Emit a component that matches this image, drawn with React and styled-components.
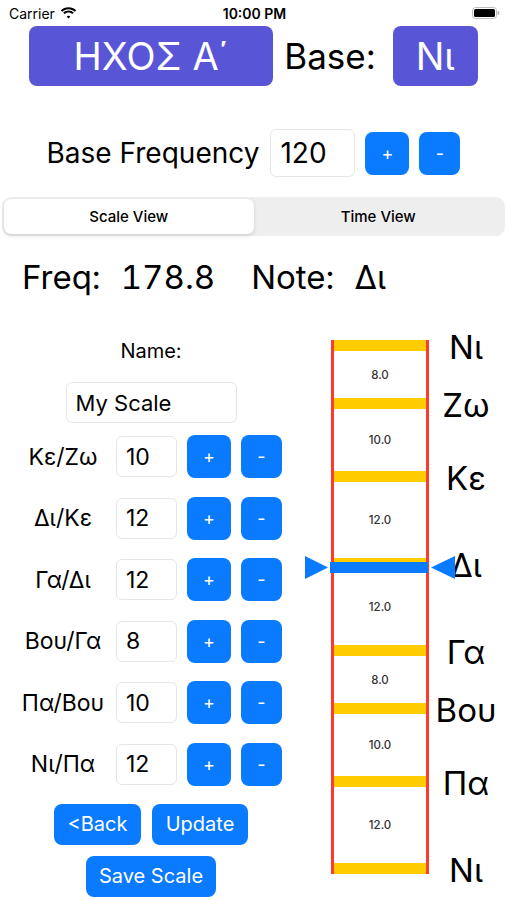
import styled, { createGlobalStyle } from 'styled-components';

const GlobalStyle = createGlobalStyle`
  * {
    margin: 0;
    padding: 0;
    box-sizing: border-box;
  }
  html, body, #root {
    width: 100%;
    background-color: #ffffff;
    font-family: "Inter", "Noto Sans", "Liberation Sans", sans-serif;
    color: #000;
  }
`;

const BLUE = '#0A7AFF';
const PURPLE = '#5856D6';
const UNIT = 7.27;
const BAR = 11;

const Page = styled.div`
  width: 507px;
  height: 900px;
  overflow: hidden;
  display: flex;
  flex-direction: column;
`;

const StatusBar = styled.div`
  height: 26px;
  display: flex;
  align-items: center;
  justify-content: space-between;
  padding: 0 7px 0 9px;
  font-size: 14px;
`;

const Carrier = styled.div`
  display: flex;
  align-items: center;
  gap: 5px;
  width: 100px;
`;

const Clock = styled.div`
  font-weight: 600;
  font-size: 14px;
`;

const BatteryBox = styled.div`
  width: 100px;
  display: flex;
  justify-content: flex-end;
`;

const TopRow = styled.div`
  display: flex;
  align-items: center;
  justify-content: center;
  height: 60px;
  gap: 11px;
`;

const PurpleButton = styled.button`
  width: ${p => p.$w}px;
  height: 60px;
  border: none;
  border-radius: 8px;
  background: ${PURPLE};
  color: #fff;
  font-family: inherit;
  font-size: 38px;
  font-weight: 400;
`;

const BaseLabel = styled.span`
  font-size: 35px;
  margin-right: 6px;
`;

const FreqRow = styled.div`
  display: flex;
  align-items: center;
  justify-content: center;
  margin-top: 43px;
  height: 48px;
  gap: 10px;
`;

const FreqLabel = styled.span`
  font-size: 28px;
  margin-right: 1px;
`;

const Field = styled.div`
  width: ${p => p.$w}px;
  height: ${p => p.$h}px;
  border: 1px solid #E6E6E6;
  border-radius: 6px;
  display: flex;
  align-items: center;
  padding-left: ${p => p.$pad || 9}px;
  font-size: ${p => p.$size}px;
`;

const StepButton = styled.button`
  width: ${p => p.$w}px;
  height: 43px;
  border: none;
  border-radius: 8px;
  background: ${BLUE};
  color: #fff;
  font-family: inherit;
  font-size: 18px;
  display: flex;
  align-items: center;
  justify-content: center;
`;

const Segmented = styled.div`
  margin: 20px 2px 0;
  height: 39px;
  background: #EEEEEF;
  border-radius: 9px;
  padding: 2px;
  display: flex;
`;

const Segment = styled.div`
  flex: 1;
  display: flex;
  align-items: center;
  justify-content: center;
  font-size: 15px;
  font-weight: 500;
  border-radius: 7px;
  background: ${p => (p.$active ? '#fff' : 'transparent')};
  box-shadow: ${p => (p.$active ? '0 2px 4px rgba(0,0,0,0.12)' : 'none')};
`;

const Reading = styled.div`
  display: flex;
  align-items: center;
  height: 38px;
  margin-top: 22px;
  padding-left: 22px;
  font-size: 33px;
  font-variant-numeric: tabular-nums;
`;

const ReadingPart = styled.span`
  margin-left: ${p => p.$ml || 0}px;
`;

const Body = styled.div`
  display: flex;
  margin-top: 43px;
  padding-left: 20px;
`;

const LeftCol = styled.div`
  width: 262px;
  display: flex;
  flex-direction: column;
  align-items: center;
`;

const NameLabel = styled.div`
  font-size: 20px;
  height: 24px;
  line-height: 24px;
`;

const NameField = styled(Field)`
  margin-top: 19px;
`;

const Rows = styled.div`
  width: 100%;
  margin-top: 12px;
  display: flex;
  flex-direction: column;
  gap: 18.5px;
`;

const Row = styled.div`
  display: flex;
  align-items: center;
  height: 43px;
  gap: 10px;
`;

const RowLabel = styled.div`
  width: 86px;
  text-align: center;
  font-size: 23px;
  white-space: nowrap;
`;

const ActionRow = styled.div`
  display: flex;
  gap: 11px;
  margin-top: ${p => p.$mt}px;
`;

const ActionButton = styled.button`
  width: ${p => p.$w}px;
  height: 41px;
  border: none;
  border-radius: 8px;
  background: ${BLUE};
  color: #fff;
  font-family: inherit;
  font-size: 20px;
`;

const RightCol = styled.div`
  margin-left: 49px;
  margin-top: 1px;
  position: relative;
  display: flex;
  flex-direction: column;
`;

const Rung = styled.div`
  display: flex;
  align-items: center;
  height: ${BAR}px;
`;

const Span = styled.div`
  display: flex;
  height: ${p => p.$h}px;
`;

const Rail = styled.div`
  width: 98px;
  height: 100%;
  border-left: 3px solid #FF3B30;
  border-right: 3px solid #FF3B30;
  display: flex;
  align-items: center;
  justify-content: center;
  font-size: 11.5px;
  font-weight: 500;
  color: #333;
`;

const RungBar = styled.div`
  width: 100%;
  height: 100%;
  background: #FFCC00;
`;

const NoteName = styled.div`
  width: 74px;
  text-align: center;
  font-size: 33px;
  line-height: ${BAR}px;
  padding-top: 4px;
  white-space: nowrap;
`;

const Pointer = styled.div`
  position: absolute;
  left: -26px;
  top: ${p => p.$top}px;
  width: 151px;
  height: 23px;
  display: flex;
  align-items: center;
`;

const PointerLine = styled.div`
  width: 98px;
  height: 11px;
  background: ${BLUE};
  margin: 0 3px 0 2px;
`;

function Wifi() {
  return (
    <svg width="17" height="12" viewBox="0 0 17 12">
      <path d="M8.5 2.2c2.4 0 4.6.9 6.3 2.5l1.4-1.5C14.2 1.3 11.5.2 8.5.2S2.8 1.3.8 3.2l1.4 1.5C3.9 3.1 6.1 2.2 8.5 2.2z" fill="#000" />
      <path d="M8.5 5.6c1.5 0 2.8.6 3.9 1.5l1.4-1.5C12.4 4.3 10.5 3.6 8.5 3.6S4.6 4.3 3.2 5.6l1.4 1.5c1.1-.9 2.4-1.5 3.9-1.5z" fill="#000" />
      <path d="M8.5 8.8c.7 0 1.3.3 1.8.7L8.5 11.5 6.7 9.5c.5-.4 1.1-.7 1.8-.7z" fill="#000" />
    </svg>
  );
}

function Battery() {
  return (
    <svg width="28" height="12" viewBox="0 0 28 12">
      <rect x="0.5" y="0.5" width="24" height="11" rx="3" fill="none" stroke="#bbb" />
      <rect x="2" y="2" width="21" height="8" rx="1.5" fill="#000" />
      <rect x="25.5" y="4" width="1.8" height="4" rx="0.8" fill="#bbb" />
    </svg>
  );
}

const intervals = [
  { pair: 'Κε/Ζω', value: 10 },
  { pair: 'Δι/Κε', value: 12 },
  { pair: 'Γα/Δι', value: 12 },
  { pair: 'Βου/Γα', value: 8 },
  { pair: 'Πα/Βου', value: 10 },
  { pair: 'Νι/Πα', value: 12 },
];

const ladder = [
  { note: 'Νι', next: 8 },
  { note: 'Ζω', next: 10 },
  { note: 'Κε', next: 12 },
  { note: 'Δι', next: 12 },
  { note: 'Γα', next: 8 },
  { note: 'Βου', next: 10 },
  { note: 'Πα', next: 12 },
  { note: 'Νι', next: null },
];

export default function App() {
  return (
    <>
      <GlobalStyle />
      <Page>
        <StatusBar>
          <Carrier>Carrier <Wifi /></Carrier>
          <Clock>10:00 PM</Clock>
          <BatteryBox><Battery /></BatteryBox>
        </StatusBar>

        <TopRow>
          <PurpleButton $w={244}>ΗΧΟΣ Α΄</PurpleButton>
          <BaseLabel>Base:</BaseLabel>
          <PurpleButton $w={85}>Νι</PurpleButton>
        </TopRow>

        <FreqRow>
          <FreqLabel>Base Frequency</FreqLabel>
          <Field $w={85} $h={48} $size={28}>120</Field>
          <StepButton $w={44}>+</StepButton>
          <StepButton $w={41}>-</StepButton>
        </FreqRow>

        <Segmented>
          <Segment $active>Scale View</Segment>
          <Segment>Time View</Segment>
        </Segmented>

        <Reading>
          <ReadingPart>Freq:</ReadingPart>
          <ReadingPart $ml={20}>178.8</ReadingPart>
          <ReadingPart $ml={36}>Note:</ReadingPart>
          <ReadingPart $ml={20}>Δι</ReadingPart>
        </Reading>

        <Body>
          <LeftCol>
            <NameLabel>Name:</NameLabel>
            <NameField $w={171} $h={41} $size={22}>My Scale</NameField>
            <Rows>
              {intervals.map(r => (
                <Row key={r.pair}>
                  <RowLabel>{r.pair}</RowLabel>
                  <Field $w={61} $h={41} $size={23}>{r.value}</Field>
                  <StepButton $w={44}>+</StepButton>
                  <StepButton $w={41}>-</StepButton>
                </Row>
              ))}
            </Rows>
            <ActionRow $mt={18}>
              <ActionButton $w={87}>&lt;Back</ActionButton>
              <ActionButton $w={96}>Update</ActionButton>
            </ActionRow>
            <ActionRow $mt={11}>
              <ActionButton $w={130}>Save Scale</ActionButton>
            </ActionRow>
          </LeftCol>

          <RightCol>
            {ladder.map((step, i) => (
              <div key={i}>
                <Rung>
                  <Rail><RungBar /></Rail>
                  <NoteName>{step.note}</NoteName>
                </Rung>
                {step.next && (
                  <Span $h={step.next * UNIT - BAR}>
                    <Rail>{step.next.toFixed(1)}</Rail>
                  </Span>
                )}
              </div>
            ))}
            <Pointer $top={216}>
              <svg width="23" height="23" viewBox="0 0 23 23">
                <polygon points="0,0 23,11.5 0,23" fill={BLUE} />
              </svg>
              <PointerLine />
              <svg width="24" height="23" viewBox="0 0 24 23">
                <polygon points="24,0 0,11.5 24,23" fill={BLUE} />
              </svg>
            </Pointer>
          </RightCol>
        </Body>
      </Page>
    </>
  );
}
